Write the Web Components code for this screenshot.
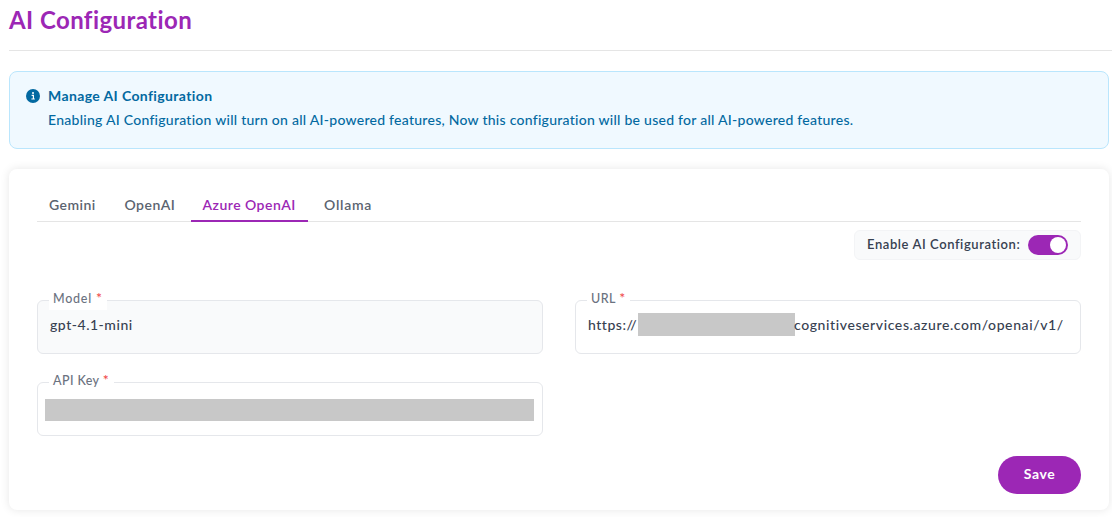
<!DOCTYPE html>
<html lang="en">
<head>
<meta charset="utf-8">
<title>AI Configuration</title>
<style>
  :root {
    --primary: #9c27b5;
    --line: #e5e7eb;
    --text: #374151;
  }
  body {
    margin: 0;
    background: #fff;
    color: var(--text);
    font-family: Lato, "Open Sans", sans-serif;
    font-size: 14px;
    overflow: hidden;
  }
</style>
</head>
<body>
<ai-config-page></ai-config-page>

<script>
// Attach an open shadow root filled from a template
function render(host, html) {
  const template = document.createElement('template');
  template.innerHTML = html;
  host.attachShadow({ mode: 'open' }).appendChild(template.content.cloneNode(true));
}

class PageTitle extends HTMLElement {
  constructor() {
    super();
    render(this, `
      <style>
        :host { display: block; height: 50px; border-bottom: 1px solid #e5e5e5; }
        h1 { margin: 0; padding-top: 5px; font-size: 24px; line-height: 30px; font-weight: 700; letter-spacing: 0.42px; color: var(--primary); }
      </style>
      <h1><slot></slot></h1>
    `);
  }
}

class InfoAlert extends HTMLElement {
  constructor() {
    super();
    render(this, `
      <style>
        :host {
          display: flex; gap: 8px; box-sizing: border-box; height: 78px; margin: 20px 3px 0 0;
          padding: 12px 16px; border: 1px solid #bae6fd; border-radius: 8px;
          background: #f0f9ff; color: #0369a1;
        }
        svg { flex: none; width: 14px; height: 14px; margin-top: 5px; }
        .title { line-height: 24px; font-weight: 700; letter-spacing: 0.38px; }
        .text { line-height: 24px; letter-spacing: 0.26px; font-weight: 500; }
      </style>
      <svg viewBox="0 0 14 14">
        <circle cx="7" cy="7" r="7" fill="currentColor"/>
        <circle cx="7" cy="4.1" r="1" fill="#fff"/>
        <path d="M5.6 6.4h1.8v3.6M5.4 10h3.4" fill="none" stroke="#fff" stroke-width="1.2"/>
      </svg>
      <div>
        <div class="title"><slot name="title"></slot></div>
        <div class="text"><slot></slot></div>
      </div>
    `);
  }
}

class ConfigCard extends HTMLElement {
  constructor() {
    super();
    render(this, `
      <style>
        :host {
          display: block; box-sizing: border-box; height: 341px; margin: 20px 3px 0 0;
          padding: 20px 28px 0; border-radius: 8px; background: #fff;
          box-shadow: 0 0 10px rgba(0, 0, 0, 0.1);
        }
      </style>
      <slot></slot>
    `);
  }
}

class TabBar extends HTMLElement {
  constructor() {
    super();
    render(this, `
      <style>
        :host { display: flex; gap: 5px; height: 32px; border-bottom: 1px solid #e5e5e5; }
      </style>
      <slot></slot>
    `);
  }
}

class TabItem extends HTMLElement {
  constructor() {
    super();
    render(this, `
      <style>
        :host {
          display: block; box-sizing: border-box; height: 33px; padding: 0 11.5px;
          line-height: 32px; font-weight: 600; letter-spacing: var(--ls, 0.47px); color: #5b6470; white-space: nowrap;
        }
        :host([active]) { color: var(--primary); border-bottom: 2px solid var(--primary); }
      </style>
      <slot></slot>
    `);
  }
}

class ToggleSwitch extends HTMLElement {
  constructor() {
    super();
    render(this, `
      <style>
        :host {
          display: flex; align-items: center; justify-content: space-between; box-sizing: border-box;
          width: 227px; height: 30px; margin: 8px 0 0 auto; padding: 0 12px;
          border: 1px solid #f3f4f6; border-radius: 6px; background: #f9fafb;
        }
        .label { margin-top: -3px; font-size: 13px; font-weight: 600; letter-spacing: 0.58px; white-space: nowrap; }
        .track { display: flex; justify-content: flex-end; box-sizing: border-box; width: 40px; height: 20px; padding: 2px; border-radius: 10px; background: var(--primary); }
        .thumb { width: 16px; height: 16px; border-radius: 50%; background: #fff; }
      </style>
      <span class="label"><slot></slot></span>
      <span class="track"><span class="thumb"></span></span>
    `);
  }
}

class FormField extends HTMLElement {
  constructor() {
    super();
    render(this, `
      <style>
        :host {
          display: block; position: relative; box-sizing: border-box; height: 54px;
          border: 1px solid var(--line); border-radius: 6px; background: #fff;
        }
        :host([disabled]) { background: #f9fafb; }
        .label {
          position: absolute; left: 11px; top: -12px; height: 21px; padding: 0 4px; background: #fff;
          font-size: 12.5px; line-height: 20px; font-weight: 500; letter-spacing: var(--label-ls, 0.5px); color: #6b7280; white-space: nowrap;
          box-sizing: border-box; width: var(--label-width);
        }
        .label i { color: #ef4444; font-size: 14px; line-height: 1; font-style: normal; }
        .value { display: flex; align-items: center; height: 46px; padding-left: 12px; font-weight: 500; letter-spacing: 0.53px; white-space: nowrap; }
      </style>
      <span class="label">${this.getAttribute('label')} <i>*</i></span>
      <div class="value"><slot></slot></div>
    `);
  }
}

class RedactedBox extends HTMLElement {
  constructor() {
    super();
    render(this, `
      <style>
        :host { display: block; flex: none; background: #c8c8c8; }
      </style>
    `);
  }
}

class SaveButton extends HTMLElement {
  constructor() {
    super();
    render(this, `
      <style>
        :host { display: block; width: 83px; margin: 20px 0 0 auto; }
        button {
          display: block; width: 83px; height: 38px; padding: 0 0 4px; border: 0; border-radius: 19px;
          background: var(--primary); color: #fff; font: 700 14px Lato, sans-serif; letter-spacing: 0.6px;
        }
      </style>
      <button type="button"><slot></slot></button>
    `);
  }
}

class AiConfigPage extends HTMLElement {
  constructor() {
    super();
    render(this, `
      <style>
        :host { display: block; box-sizing: border-box; height: 517px; padding-left: 9px; overflow: hidden; }
        .fields { display: grid; grid-template-columns: 1fr 1fr; gap: 28px 32px; margin-top: 40px; }
        .scheme { width: 50px; }
        .host { margin-left: -1px; letter-spacing: 0.6px; }
      </style>
      <page-title>AI Configuration</page-title>
      <info-alert>
        <span slot="title">Manage AI Configuration</span>
        Enabling AI Configuration will turn on all AI-powered features, Now this configuration will be used for all AI-powered features.
      </info-alert>
      <config-card>
        <tab-bar>
          <tab-item style="width: 71px; padding-left: 12px">Gemini</tab-item>
          <tab-item style="width: 73px">OpenAI</tab-item>
          <tab-item style="width: 117px" active>Azure OpenAI</tab-item>
          <tab-item style="--ls: 0.75px; padding-left: 11px">Ollama</tab-item>
        </tab-bar>
        <toggle-switch>Enable AI Configuration:</toggle-switch>
        <div class="fields">
          <form-field label="Model" disabled style="--label-width: 58px; --label-ls: 0.75px">gpt-4.1-mini</form-field>
          <form-field label="URL" style="--label-width: 43px"><span class="scheme">https://</span><redacted-box style="width: 157px; height: 23px"></redacted-box><span class="host">cognitiveservices.azure.com/openai/v1/</span></form-field>
          <form-field label="API Key" style="--label-width: 65px; --label-ls: 0.4px"><redacted-box style="width: 489px; height: 22px; margin: 7px 0 0 -5px"></redacted-box></form-field>
        </div>
        <save-button>Save</save-button>
      </config-card>
    `);
  }
}

customElements.define('page-title', PageTitle);
customElements.define('info-alert', InfoAlert);
customElements.define('config-card', ConfigCard);
customElements.define('tab-bar', TabBar);
customElements.define('tab-item', TabItem);
customElements.define('toggle-switch', ToggleSwitch);
customElements.define('form-field', FormField);
customElements.define('redacted-box', RedactedBox);
customElements.define('save-button', SaveButton);
customElements.define('ai-config-page', AiConfigPage);
</script>
</body>
</html>
